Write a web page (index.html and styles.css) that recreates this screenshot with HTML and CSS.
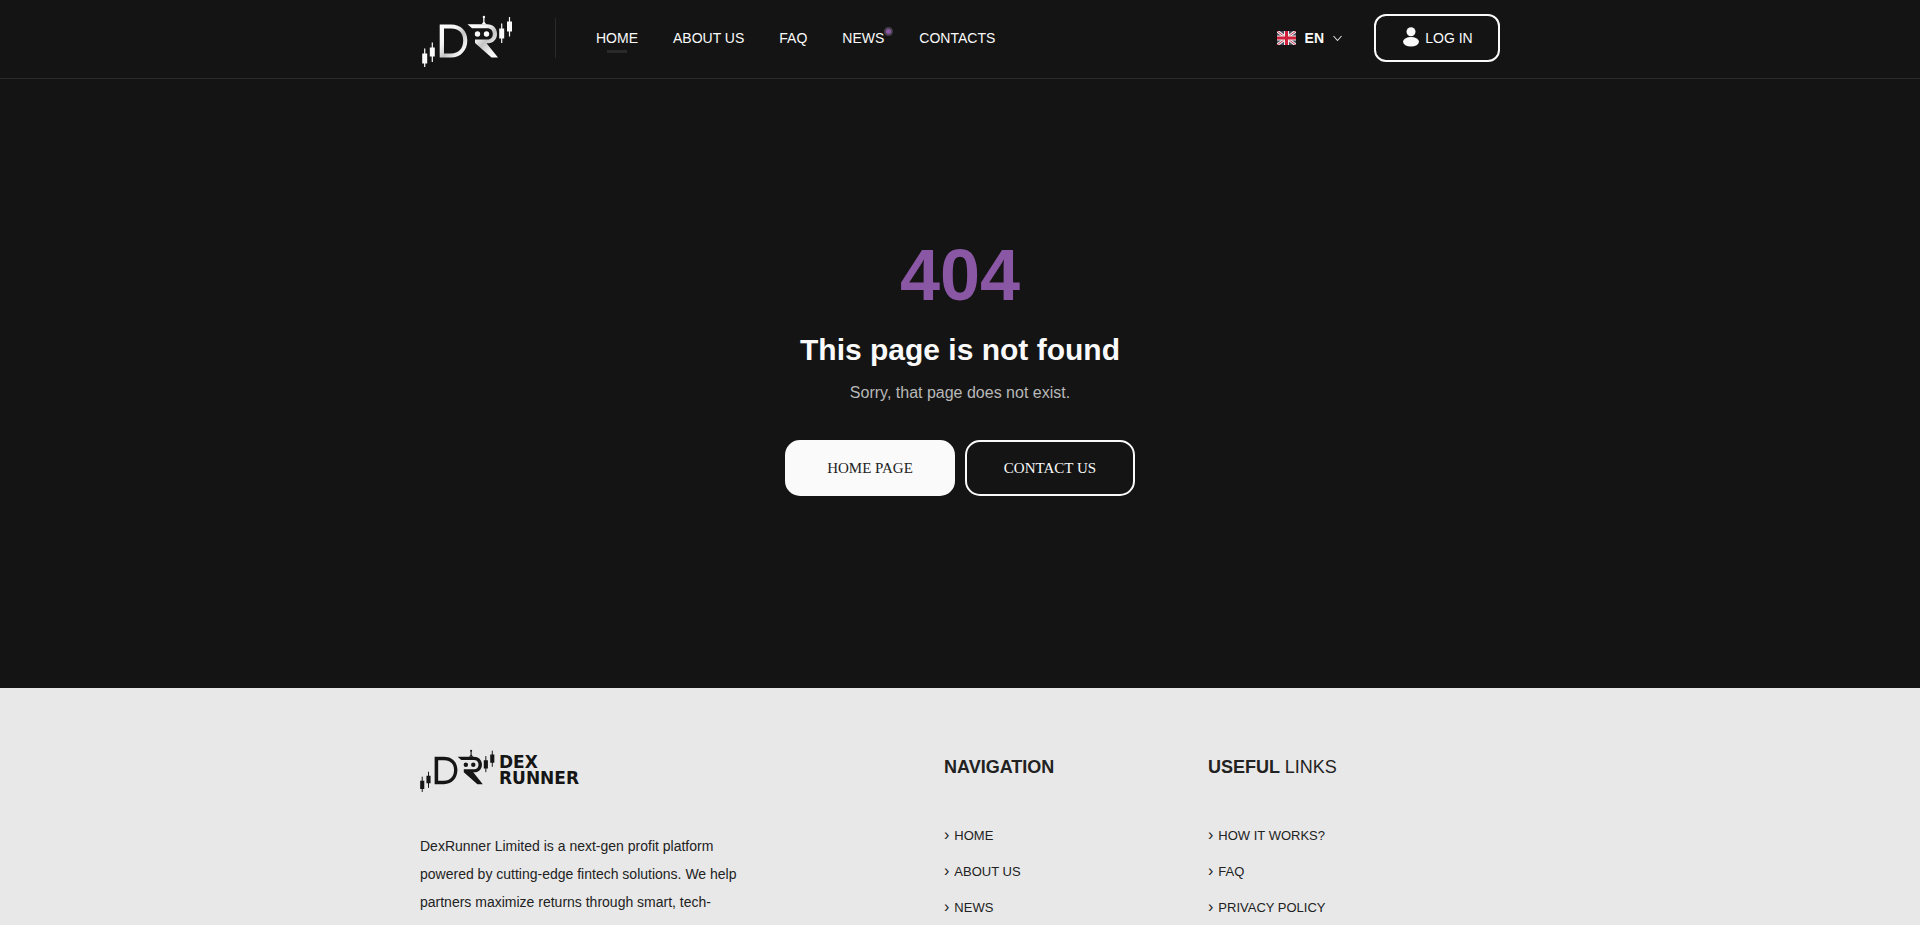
FILE: index.html
```html
<!DOCTYPE html>
<html lang="en">
<head>
<meta charset="utf-8">
<title>DexRunner – page not found</title>
<link rel="stylesheet" href="styles.css">
</head>
<body>
<svg width="0" height="0" class="defs" aria-hidden="true">
  <defs>
    <linearGradient id="metal" x1="0" y1="0" x2="1" y2="1">
      <stop offset="0" stop-color="#fff"/><stop offset=".35" stop-color="#f4f4f4"/><stop offset=".55" stop-color="#c4c4c4"/><stop offset=".8" stop-color="#f4f4f4"/><stop offset="1" stop-color="#fff"/>
    </linearGradient>
  </defs>
  <symbol id="mark" viewBox="0 0 92 54">
    <g class="candles">
      <path d="M2.700 34.500V53M10.300 28.500V48M79.700 9.500V29M87.500 3V22.500" stroke-width="1.200"/>
      <path d="M2.700 39.500V49.500M10.300 33.500V42.500M79.700 14.500V24.500M87.500 7.500V17.500" stroke-width="5"/>
    </g>
    <path class="ink" fill-rule="evenodd" d="M17.700 10.500H29C39 10.500 45.300 17 45.300 26.500S39 43.500 29 43.500H17.700ZM22 14.500V39.500H29C36.500 39.500 41.200 34.500 41.200 26.500S36.500 14.500 29 14.500Z"/>
    <path class="ink" d="M45.500 10.300H65C71.500 10.300 75 14.500 75 20C75 25.500 71 29 66.500 29.200H64.500L76 43.500H69.500L53 29V25.500H65.500C69 25.500 70.800 23 70.800 20C70.800 16.500 69 14.200 65 14.200H50Z"/>
    <circle class="solid" cx="55.500" cy="20" r="2.700"/>
    <circle class="solid" cx="64.500" cy="20" r="2.700"/>
    <path class="solid" d="M61.200 3.500H62.500V8L64.500 10.500H59.500L61.200 8Z"/>
    <circle class="solid" cx="61.900" cy="3" r="1.200"/>
  </symbol>
</svg>

<header class="header">
  <div class="container header-row">
    <a class="logo" href="#" aria-label="DexRunner"><svg class="mark"><use href="#mark"/></svg></a>
    <nav class="nav">
      <a class="active" href="#">HOME</a>
      <a href="#">ABOUT US</a>
      <a href="#">FAQ</a>
      <a class="news" href="#">NEWS</a>
      <a href="#">CONTACTS</a>
    </nav>
    <button class="lang" type="button">
      <svg class="flag" viewBox="0 0 19 14">
        <path fill="#464a5c" d="M0 0H19V14H0Z"/>
        <path stroke="#eee" stroke-width="3" d="M0 0 19 14M19 0 0 14"/>
        <path stroke="#c8324b" d="M0 0 19 14M19 0 0 14"/>
        <path stroke="#eee" stroke-width="5" d="M9.500 0V14M0 7H19"/>
        <path stroke="#d01f3c" stroke-width="3" d="M9.500 0V14M0 7H19"/>
      </svg>
      <span>EN</span>
      <svg class="chevron" viewBox="0 0 9 7"><path d="M.5 1 4.500 5.500 8.500 1"/></svg>
    </button>
    <button class="login" type="button">
      <svg class="user" viewBox="0 0 16 20"><circle cx="8" cy="4.800" r="4.500"/><ellipse cx="8" cy="14.800" rx="8" ry="4.800"/></svg>
      <span>LOG IN</span>
    </button>
  </div>
</header>

<main class="main">
  <p class="code">404</p>
  <h1>This page is not found</h1>
  <p class="sorry">Sorry, that page does not exist.</p>
  <div class="actions">
    <a class="btn btn-light" href="#">HOME PAGE</a>
    <a class="btn" href="#">CONTACT US</a>
  </div>
</main>

<footer class="footer">
  <div class="container footer-row">
    <section class="about">
      <a class="brand" href="#"><svg class="mark"><use href="#mark"/></svg><span>DEX<br>RUNNER</span></a>
      <p>DexRunner Limited is a next-gen profit platform powered by cutting-edge fintech solutions. We help partners maximize returns through smart, tech-</p>
    </section>
    <section class="links">
      <h2>NAVIGATION</h2>
      <ul>
        <li><a href="#">HOME</a></li>
        <li><a href="#">ABOUT US</a></li>
        <li><a href="#">NEWS</a></li>
      </ul>
    </section>
    <section class="links">
      <h2>USEFUL <span>LINKS</span></h2>
      <ul>
        <li><a href="#">HOW IT WORKS?</a></li>
        <li><a href="#">FAQ</a></li>
        <li><a href="#">PRIVACY POLICY</a></li>
      </ul>
    </section>
  </div>
</footer>
</body>
</html>
```
FILE: styles.css
```css
*, *::before, *::after { box-sizing: border-box; }
body { margin: 0; background: #141414; color: #fafafa; font: 14px/20px "Liberation Sans", Arial, sans-serif; overflow-x: hidden; }
a { color: inherit; text-decoration: none; }
button { margin: 0; padding: 0; border: 0; background: none; color: inherit; font: inherit; cursor: pointer; }
h1, h2, p, ul { margin: 0; padding: 0; }
ul { list-style: none; }
svg { display: block; flex: none; }
.defs { position: absolute; }
.container { max-width: 1080px; margin: 0 auto; }

.header { border-bottom: 1px solid #2a2a2a; }
.header-row { display: flex; align-items: center; padding: 14px 0 16px; }
.logo { height: 48px; padding: 0 41px 0 2px; --ink: url(#metal); }
.logo .mark { width: 92px; height: 54px; }
.candles { stroke: currentColor; }
.solid { fill: currentColor; }
.ink { fill: var(--ink, currentColor); }
.nav { display: flex; gap: 35px; padding: 10px 0 10px 40px; border-left: 1px solid #2a2a2a; }
.nav a { position: relative; }
.active::after { content: ""; position: absolute; left: 50%; top: 22px; width: 20px; height: 3px; margin-left: -10px; background: #2a2a2a; }
.news::after { content: ""; position: absolute; left: 100%; top: -1px; width: 9px; height: 9px; border: 2px solid #48404e; border-radius: 50%; background: #8a57a5; }
.lang { display: flex; align-items: center; gap: 9px; margin-left: auto; font-weight: 700; }
.flag { width: 19px; height: 14px; }
.chevron { width: 9px; height: 7px; fill: none; stroke: #ddd; stroke-width: 1.100; }
.login { display: flex; align-items: center; justify-content: center; gap: 6px; width: 126px; height: 48px; margin-left: 32px; padding-left: 2px; border: 2px solid #fafafa; border-radius: 12px; }
.user { width: 16px; height: 20px; margin-top: -2px; fill: #fafafa; }

.main { padding: 156px 0 192px; text-align: center; }
.code { color: #8a57a5; font-size: 72px; line-height: 80px; font-weight: 700; }
h1 { margin-top: 15px; font-size: 30px; line-height: 40px; }
.sorry { margin-top: 13px; color: #b8b8b8; font-size: 16px; line-height: 20px; }
.actions { display: flex; justify-content: center; gap: 10px; margin-top: 37px; }
.btn { width: 170px; padding: 16px 0; border: 2px solid #fafafa; border-radius: 15px; font: 15px/20px "Liberation Serif", "Times New Roman", serif; }
.btn-light { background: #fafafa; color: #222; }

.footer { background: #e8e8e8; color: #222; }
.footer-row { display: flex; padding: 60px 0 8px; }
.about { width: 524px; }
.brand { display: flex; align-items: center; gap: 3px; height: 44px; color: #151515; }
.brand .mark { width: 76px; height: 45px; }
.brand span { font: bold 17px/16px "DejaVu Sans", sans-serif; }
.about p { max-width: 330px; margin-top: 40px; line-height: 28px; }
.links { width: 264px; }
h2 { margin: 9px 0 48px; font-size: 18px; line-height: 20px; }
h2 span { font-weight: 400; }
.links li { height: 36px; font-size: 13px; line-height: 20px; }
.links a::before { content: "›"; margin-right: 5px; font-size: 16px; }
```
